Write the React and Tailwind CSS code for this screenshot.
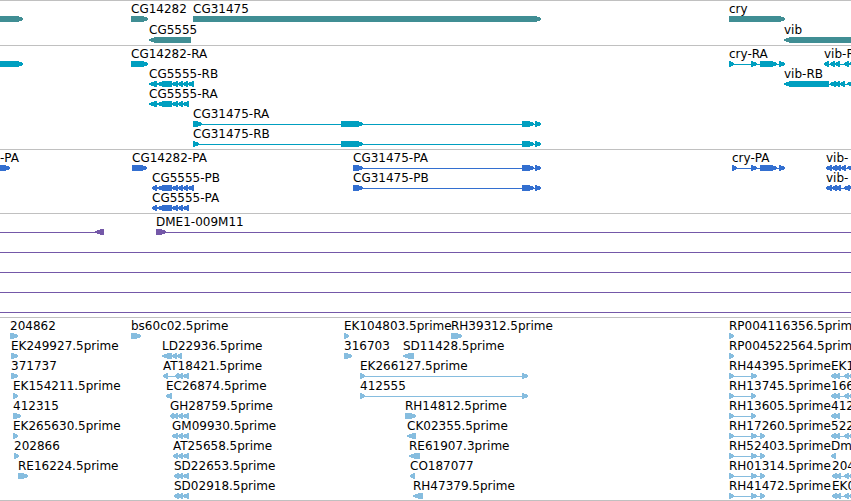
import React from 'react'

// Each feature: name, direction (1 = forward, -1 = reverse), blocks as [start, end] pairs.
// Neighbouring blocks are joined by a thin line.
const tracks = [
  {
    id: 'gene',
    color: 'text-[#408e94]',
    row: 'h-[21px]',
    pad: 'pb-0.5',
    rows: [
      [
        { dir: 1, blocks: [[-20, 23]] },
        { name: 'CG14282', dir: 1, blocks: [[131, 148]] },
        { name: 'CG31475', dir: 1, blocks: [[193, 541]] },
        { name: 'cry', dir: 1, blocks: [[729, 785]] },
      ],
      [
        { name: 'CG5555', dir: -1, blocks: [[149, 191]] },
        { name: 'vib', dir: -1, blocks: [[784, 900]] },
      ],
    ],
  },
  {
    id: 'transcript',
    color: 'text-[#009fc0]',
    row: 'h-5',
    pad: 'pb-[3px]',
    rows: [
      [
        { dir: 1, blocks: [[-20, 23]] },
        { name: 'CG14282-RA', dir: 1, blocks: [[131, 148]] },
        { name: 'cry-RA', dir: 1, blocks: [[729, 734], [751, 757], [760, 777], [779, 785]] },
        { name: 'vib-R', dir: -1, blocks: [[824, 829], [830, 835], [835, 840], [844, 849], [849, 856]] },
      ],
      [
        { name: 'CG5555-RB', dir: -1, blocks: [[149, 157], [157, 172], [172, 178], [178, 183], [183, 188], [188, 194]] },
        { name: 'vib-RB', dir: -1, blocks: [[784, 829], [830, 836], [835, 840], [840, 845], [847, 855]] },
      ],
      [{ name: 'CG5555-RA', dir: -1, blocks: [[149, 157], [157, 172], [172, 178], [178, 183], [183, 189]] }],
      [{ name: 'CG31475-RA', dir: 1, blocks: [[193, 202], [341, 363], [522, 534], [535, 541]] }],
      [{ name: 'CG31475-RB', dir: 1, blocks: [[193, 199], [341, 363], [522, 534], [535, 541]] }],
    ],
  },
  {
    id: 'protein',
    color: 'text-[#336fd0]',
    row: 'h-5',
    pad: 'pb-[3px]',
    rows: [
      [
        { name: '-PA', dir: 1, at: 0, blocks: [[-20, 10]] },
        { name: 'CG14282-PA', dir: 1, blocks: [[132, 147]] },
        { name: 'CG31475-PA', dir: 1, blocks: [[353, 363], [522, 534], [535, 541]] },
        { name: 'cry-PA', dir: 1, blocks: [[732, 737], [751, 757], [760, 777], [779, 785]] },
        { name: 'vib-', dir: -1, blocks: [[826, 832], [832, 837], [836, 841], [841, 846], [847, 856]] },
      ],
      [
        { name: 'CG5555-PB', dir: -1, blocks: [[152, 157], [157, 172], [172, 178], [178, 183], [183, 188], [188, 194]] },
        { name: 'CG31475-PB', dir: 1, blocks: [[353, 363], [522, 534], [535, 541]] },
        { name: 'vib-', dir: -1, blocks: [[826, 832], [832, 837], [836, 841], [844, 850], [849, 856]] },
      ],
      [{ name: 'CG5555-PA', dir: -1, blocks: [[152, 157], [157, 172], [172, 178], [178, 183], [183, 189]] }],
    ],
  },
  {
    id: 'bac',
    color: 'text-[#7458a8]',
    row: 'h-5',
    pad: 'pb-[3px]',
    rows: [
      [
        { dir: -1, blocks: [[-20, -10], [95, 104]] },
        { name: 'DME1-009M11', dir: 1, blocks: [[156, 166], [4000, 4010]] },
      ],
      [{ dir: 1, blocks: [[-20, -10], [4000, 4010]] }],
      [{ dir: 1, blocks: [[-20, -10], [4000, 4010]] }],
      [{ dir: 1, blocks: [[-20, -10], [4000, 4010]] }],
      [{ dir: 1, blocks: [[-20, -10], [4000, 4010]] }],
    ],
  },
  {
    id: 'est',
    color: 'text-[#86bddf]',
    row: 'h-5',
    pad: 'pb-0.5',
    rows: [
      [
        { name: '204862', dir: 1, blocks: [[10, 18]] },
        { name: 'bs60c02.5prime', dir: 1, blocks: [[131, 141]] },
        { name: 'EK104803.5prime', dir: 1, blocks: [[344, 349]] },
        { name: 'RH39312.5prime', dir: 1, blocks: [[451, 462]] },
        { name: 'RP004116356.5prim', dir: 1, blocks: [[729, 734]] },
      ],
      [
        { name: 'EK249927.5prime', dir: 1, blocks: [[11, 18]] },
        { name: 'LD22936.5prime', dir: -1, blocks: [[162, 172], [172, 177], [177, 182]] },
        { name: '316703', dir: 1, blocks: [[344, 352]] },
        { name: 'SD11428.5prime', dir: -1, blocks: [[403, 414]] },
        { name: 'RP004522564.5prim', dir: 1, blocks: [[729, 734]] },
      ],
      [
        { name: '371737', dir: 1, blocks: [[11, 18]] },
        { name: 'AT18421.5prime', dir: -1, blocks: [[163, 168], [175, 179], [178, 183], [183, 189]] },
        { name: 'EK266127.5prime', dir: 1, blocks: [[360, 365], [522, 528]] },
        { name: 'RH44395.5prime', dir: 1, blocks: [[729, 734], [751, 757]] },
        { name: 'EK1', dir: -1, blocks: [[831, 836], [835, 840], [844, 849], [848, 856]] },
      ],
      [
        { name: 'EK154211.5prime', dir: 1, blocks: [[13, 18]] },
        { name: 'EC26874.5prime', dir: -1, blocks: [[166, 172]] },
        { name: '412555', dir: 1, blocks: [[360, 365], [522, 528]] },
        { name: 'RH13745.5prime', dir: 1, blocks: [[729, 734], [751, 756]] },
        { name: '166', dir: -1, blocks: [[831, 836], [835, 840], [844, 849], [848, 856]] },
      ],
      [
        { name: '412315', dir: 1, blocks: [[13, 21]] },
        { name: 'GH28759.5prime', dir: -1, blocks: [[170, 174], [173, 178], [178, 183], [183, 189]] },
        { name: 'RH14812.5prime', dir: 1, blocks: [[405, 416]] },
        { name: 'RH13605.5prime', dir: 1, blocks: [[729, 734], [751, 756]] },
        { name: '412', dir: -1, blocks: [[831, 836], [835, 840]] },
      ],
      [
        { name: 'EK265630.5prime', dir: 1, blocks: [[13, 18]] },
        { name: 'GM09930.5prime', dir: -1, blocks: [[172, 178], [178, 183], [183, 189]] },
        { name: 'CK02355.5prime', dir: -1, blocks: [[407, 416]] },
        { name: 'RH17260.5prime', dir: 1, blocks: [[729, 734], [751, 757], [760, 765]] },
        { name: '522', dir: -1, blocks: [[831, 836], [835, 840], [844, 849], [848, 856]] },
      ],
      [
        { name: '202866', dir: 1, blocks: [[14, 19]] },
        { name: 'AT25658.5prime', dir: -1, blocks: [[173, 178], [178, 183], [183, 189]] },
        { name: 'RE61907.3prime', dir: -1, blocks: [[409, 420]] },
        { name: 'RH52403.5prime', dir: 1, blocks: [[729, 734], [751, 757], [760, 765]] },
        { name: 'Dm', dir: -1, blocks: [[831, 836]] },
      ],
      [
        { name: 'RE16224.5prime', dir: 1, blocks: [[18, 28]] },
        { name: 'SD22653.5prime', dir: -1, blocks: [[174, 179], [178, 183], [183, 189]] },
        { name: 'CO187077', dir: -1, blocks: [[410, 415]] },
        { name: 'RH01314.5prime', dir: 1, blocks: [[729, 734], [751, 757], [760, 765]] },
        { name: '204', dir: -1, blocks: [[832, 837], [836, 841], [844, 849], [848, 856]] },
      ],
      [
        { name: 'SD02918.5prime', dir: -1, blocks: [[174, 179], [178, 183], [183, 189]] },
        { name: 'RH47379.5prime', dir: -1, blocks: [[413, 423]] },
        { name: 'RH41472.5prime', dir: 1, blocks: [[729, 734], [751, 757], [760, 765]] },
        { name: 'EK0', dir: -1, blocks: [[832, 837], [836, 841], [844, 849], [848, 856]] },
      ],
    ],
  },
]

function blockPoints([start, end], dir) {
  const head = Math.min(6, end - start - 1)
  if (dir > 0) {
    return `${start},0 ${end - head},0 ${end},2 ${end},4 ${end - head},6 ${start},6`
  }
  return `${end},0 ${start + head},0 ${start},2 ${start},4 ${start + head},6 ${end},6`
}

function Glyph({ dir, blocks }) {
  const first = blocks[0][0]
  const last = blocks[blocks.length - 1][1]
  return (
    <g>
      {blocks.length > 1 && <rect x={first} y="3" width={last - first} height="1" />}
      {blocks.map((block) => (
        <polygon key={block[0]} points={blockPoints(block, dir)} />
      ))}
    </g>
  )
}

function Row({ features, height }) {
  return (
    <div className={`relative ${height}`}>
      {features.filter((f) => f.name).map((f) => (
        <span
          key={f.name}
          className="absolute top-0 whitespace-nowrap text-black"
          style={{ left: f.at ?? f.blocks[0][0] }}
        >
          {f.name}
        </span>
      ))}
      <svg className="absolute top-[15px] left-0 h-1.5 w-full fill-current" shapeRendering="crispEdges" aria-hidden="true">
        {features.map((f) => (
          <Glyph key={f.blocks[0][0]} dir={f.dir} blocks={f.blocks} />
        ))}
      </svg>
    </div>
  )
}

function Track({ track }) {
  return (
    <section className={`border-t border-[#c0c0c0] ${track.color} ${track.pad}`}>
      {track.rows.map((features, i) => (
        <Row key={i} features={features} height={track.row} />
      ))}
    </section>
  )
}

export default function App() {
  return (
    <main className="overflow-hidden border-b border-[#c0c0c0] bg-white font-['DejaVu_Sans',sans-serif] text-[12px] leading-4">
      {tracks.map((track) => (
        <Track key={track.id} track={track} />
      ))}
    </main>
  )
}
